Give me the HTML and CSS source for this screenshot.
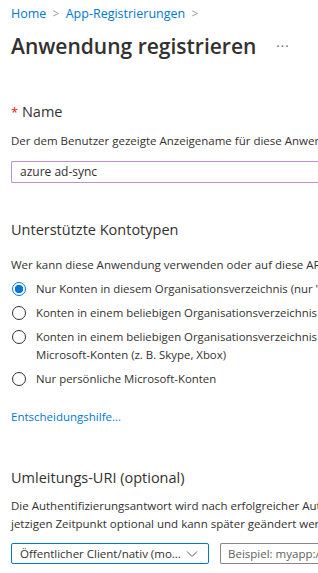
FILE: index.html
```html
<!DOCTYPE html>
<html>
  <head>
    <title>Anwendung registrieren</title>
    <link rel="stylesheet" href="styles.css">
  </head>
  <body>
    <div id="page">
      <nav class="breadcrumb">
        <a href="#">Home</a>
        <span class="chevron">&gt;</span>
        <a href="#">App-Registrierungen</a>
        <span class="chevron">&gt;</span>
      </nav>

      <div class="title-row">
        <h1>Anwendung registrieren</h1>
        <span class="more">&middot;&middot;&middot;</span>
      </div>

      <section class="name-section">
        <h2><span class="required">*</span> Name</h2>
        <p class="desc">Der dem Benutzer gezeigte Anzeigename für diese Anwendung (kann später geändert werden).</p>
        <div class="textbox">azure ad-sync</div>
      </section>

      <section class="account-section">
        <h2>Unterstützte Kontotypen</h2>
        <p class="desc">Wer kann diese Anwendung verwenden oder auf diese API zugreifen?</p>
        <div class="radio-list">
          <div class="radio checked">
            <span class="dot"></span>
            <span class="label">Nur Konten in diesem Organisationsverzeichnis (nur "Standardverzeichnis" – einzelner Mandant)</span>
          </div>
          <div class="radio">
            <span class="dot"></span>
            <span class="label">Konten in einem beliebigen Organisationsverzeichnis (beliebiges Azure AD-Verzeichnis – mehrinstanzenfähig)</span>
          </div>
          <div class="radio">
            <span class="dot"></span>
            <span class="label">Konten in einem beliebigen Organisationsverzeichnis (beliebiges Azure AD-Verzeichnis – mehrinstanzenfähig) und persönliche<br>Microsoft-Konten (z. B. Skype, Xbox)</span>
          </div>
          <div class="radio">
            <span class="dot"></span>
            <span class="label">Nur persönliche Microsoft-Konten</span>
          </div>
        </div>
        <a class="help" href="#">Entscheidungshilfe...</a>
      </section>

      <section class="redirect-section">
        <h2>Umleitungs-URI (optional)</h2>
        <p class="desc">Die Authentifizierungsantwort wird nach erfolgreicher Authentifizierung an diesen URI zurückgegeben. Die Angabe ist zum<br>jetzigen Zeitpunkt optional und kann später geändert werden, für die meisten Authentifizierungsszenarien ist jedoch ein Wert erforderlich.</p>
        <div class="uri-row">
          <div class="select">
            <span class="select-text">Öffentlicher Client/nativ (mo...</span>
            <svg class="caret" width="12" height="8" viewBox="0 0 12 8">
              <path d="M1 1.5 L6 6.5 L11 1.5" fill="none" stroke="#605e5c" stroke-width="1"/>
            </svg>
          </div>
          <div class="uri-input">Beispiel: myapp://auth</div>
        </div>
      </section>
    </div>
  </body>
</html>
```

FILE: styles.css
```css
body {
  margin: 0;
  background: white;
  font-family: "Open Sans", "Noto Sans", sans-serif;
  color: #323130;
  overflow: hidden;
}

#page {
  padding: 5px 0 0 11px;
  width: 307px;
  overflow: hidden;
}

a {
  color: #0078d4;
  text-decoration: none;
}

.breadcrumb {
  font-size: 12.5px;
  height: 18px;
  line-height: 18px;
  white-space: nowrap;
}

.chevron {
  color: #a19f9d;
  margin: 0 3px;
  font-size: 12px;
}

.title-row {
  display: flex;
  align-items: center;
  height: 40px;
  margin-top: 3px;
}

h1 {
  margin: 0;
  font-size: 21px;
  font-weight: 600;
  color: #323130;
  white-space: nowrap;
}

.more {
  margin-left: 20px;
  font-size: 13px;
  color: #605e5c;
  letter-spacing: 1px;
}

h2 {
  margin: 0;
  font-size: 14.5px;
  font-weight: 400;
  line-height: 20px;
  white-space: nowrap;
}

.required {
  color: #e81123;
  font-size: 13px;
}

.desc {
  margin: 0;
  font-size: 11.5px;
  line-height: 18px;
  white-space: nowrap;
}

.name-section {
  margin-top: 36px;
}

.name-section .desc {
  margin-top: 10px;
}

.textbox {
  margin-top: 11px;
  height: 20px;
  line-height: 20px;
  border: 1px solid #b990d5;
  border-right: none;
  border-radius: 2px 0 0 2px;
  padding-left: 8px;
  font-size: 12px;
  white-space: nowrap;
}

.account-section {
  margin-top: 37px;
}

.account-section .desc {
  margin-top: 16px;
}

.radio-list {
  margin-top: 6px;
}

.radio {
  display: flex;
  align-items: flex-start;
  margin-bottom: 6px;
}

.dot {
  flex: none;
  width: 14px;
  height: 14px;
  border: 1px solid #323130;
  border-radius: 50%;
  margin: 2px 10px 0 1px;
  box-sizing: border-box;
}

.checked .dot {
  border-color: #0078d4;
  background: radial-gradient(circle, #0078d4 0 4px, white 4.5px);
}

.label {
  font-size: 11.4px;
  line-height: 18px;
  white-space: nowrap;
}

.help {
  display: block;
  margin-top: 20px;
  font-size: 11.5px;
  line-height: 18px;
}

.redirect-section {
  margin-top: 42px;
}

.redirect-section .desc {
  margin-top: 9px;
}

.uri-row {
  display: flex;
  margin-top: 10px;
  gap: 11px;
}

.select {
  flex: none;
  width: 198px;
  height: 21px;
  border: 1px solid #0078d4;
  border-radius: 2px;
  display: flex;
  align-items: center;
  justify-content: space-between;
  padding: 0 10px 0 8px;
  box-sizing: border-box;
  font-size: 11.5px;
}

.select-text {
  white-space: nowrap;
}

.uri-input {
  flex: none;
  width: 120px;
  height: 21px;
  line-height: 19px;
  box-sizing: border-box;
  border: 1px solid #8a8886;
  border-right: none;
  border-radius: 2px 0 0 2px;
  padding-left: 7px;
  font-size: 11.5px;
  color: #605e5c;
  white-space: nowrap;
  overflow: hidden;
}
```
